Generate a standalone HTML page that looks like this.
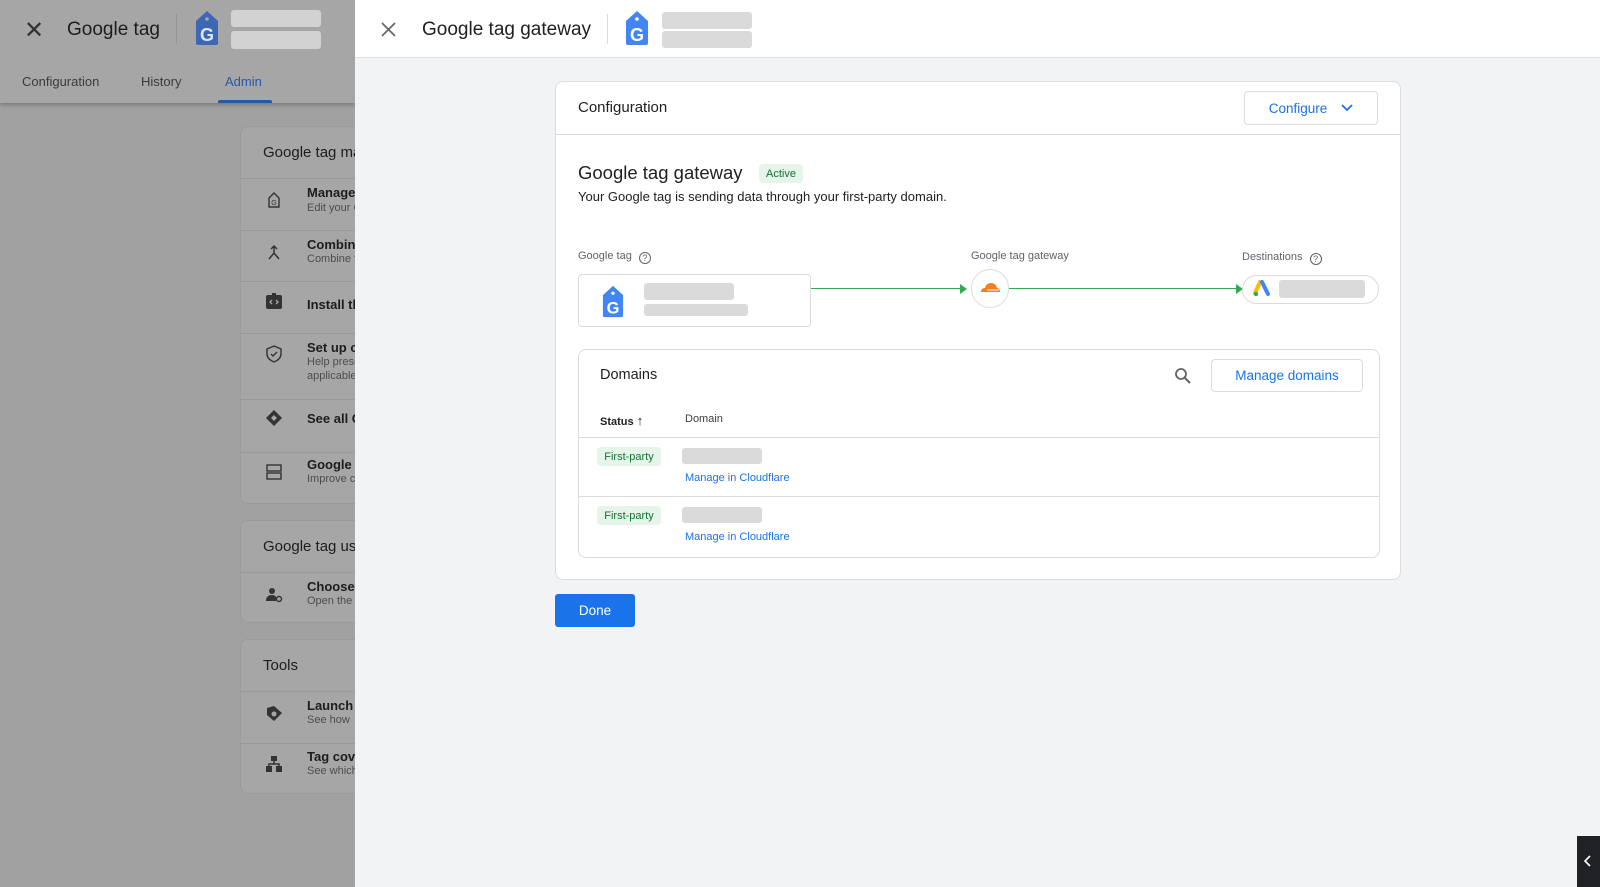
<!DOCTYPE html>
<html><head><meta charset="utf-8"><style>
*{box-sizing:border-box;margin:0;padding:0}
body{width:1600px;height:887px;overflow:hidden;font-family:"Liberation Sans",Arial,sans-serif;background:#f1f3f4;position:relative;color:#202124}
.a{position:absolute}
.ph{position:absolute;background:#dadada;border-radius:3px}
#left{left:0;top:0;width:355px;height:887px;background:#a1a1a2;overflow:hidden}
#left .hdr{left:0;top:0;width:355px;height:103px;background:#a6a6a7;box-shadow:0 2px 4px rgba(0,0,0,.25)}
.lc{position:absolute;left:240px;width:200px;background:#a6a6a7;border:1px solid #999a9b;border-radius:8px}
.lr{position:absolute;left:0;right:0;border-top:1px solid #999a9b}
.lt{position:absolute;left:66px;font-size:13px;font-weight:bold;color:#1d1d1d;white-space:nowrap}
.ls{position:absolute;left:66px;font-size:11px;color:#4d4d4d;white-space:nowrap}
.li{position:absolute;left:24px;width:18px;height:18px}
.card{position:absolute;background:#fff;border:1px solid #dadce0;border-radius:8px}
.lbl{font-size:11px;color:#5f6368}
.btn{position:absolute;border:1px solid #dadce0;border-radius:4px;background:#fff;color:#1a73e8;font-size:13.5px;display:flex;align-items:center;justify-content:center}
.chip{position:absolute;background:#e6f4ea;color:#137333;font-size:11px;border-radius:4px;display:flex;align-items:center;justify-content:center}
.link{position:absolute;color:#1a73e8;font-size:11px}
</style></head><body>

<div id="left" class="a">
  <div class="a hdr">
    <div class="a" style="left:24px;top:16px;font-size:24px;color:#333;font-weight:300">✕</div>
    <div class="a" style="left:67px;top:19px;font-size:19px;color:#1d1d1d">Google tag</div>
    <div class="a" style="left:176px;top:14px;width:1px;height:30px;background:#939393"></div>
    <svg class="a" style="left:194px;top:10px" width="26" height="36" viewBox="0 0 26 36"><path d="M13 1 L24 11 V33 Q24 35 22 35 H4 Q2 35 2 33 V11 Z" fill="#3d67b5"/><circle cx="13" cy="9" r="1.8" fill="#a6a6a7"/><text x="13" y="31" font-size="18" font-weight="bold" fill="#dfe6f2" text-anchor="middle" font-family="Liberation Sans">G</text></svg>
    <div class="a" style="left:231px;top:10px;width:90px;height:17px;background:#d2d2d2;border-radius:3px"></div>
    <div class="a" style="left:231px;top:31px;width:90px;height:18px;background:#d2d2d2;border-radius:3px"></div>
    <div class="a" style="left:22px;top:74px;font-size:13px;color:#3b3b3b">Configuration</div>
    <div class="a" style="left:141px;top:74px;font-size:13px;color:#3b3b3b">History</div>
    <div class="a" style="left:225px;top:74px;font-size:13px;color:#2a56a8">Admin</div>
    <div class="a" style="left:218px;top:100px;width:54px;height:3px;background:#2a56a8;border-radius:2px 2px 0 0"></div>
  </div>
  <div class="lc" style="top:126px;height:378px">
    <div class="a" style="left:22px;top:17px;font-size:15px;color:#1d1d1d;white-space:nowrap">Google tag management</div>
    <div class="lr" style="top:51px"></div>
    <svg class="li" style="top:64px" viewBox="0 0 18 18"><path d="M9 2 L14 7 V16 H4 V7 Z" fill="none" stroke="#333" stroke-width="1.4"/><text x="9" y="14" font-size="7" text-anchor="middle" fill="#333">G</text></svg>
    <div class="lt" style="top:58px">Manage Google tag</div><div class="ls" style="top:75px">Edit your Google tag</div>
    <div class="lr" style="top:103px"></div>
    <svg class="li" style="top:116px" viewBox="0 0 18 18"><path d="M9 3 V10 L4 16 M9 10 L14 16 M6 6 L9 3 L12 6" fill="none" stroke="#333" stroke-width="1.5"/></svg>
    <div class="lt" style="top:110px">Combine with another tag</div><div class="ls" style="top:126px">Combine tags</div>
    <div class="lr" style="top:154px"></div>
    <svg class="li" style="top:165px" viewBox="0 0 18 18"><rect x="1" y="3" width="16" height="14" rx="2" fill="#333"/><rect x="7" y="1" width="4" height="3" fill="#333"/><path d="M7 8 L5 10 L7 12 M11 8 L13 10 L11 12" stroke="#a6a6a7" stroke-width="1.3" fill="none"/></svg>
    <div class="lt" style="top:170px">Install this Google tag</div>
    <div class="lr" style="top:206px"></div>
    <svg class="li" style="top:218px" viewBox="0 0 18 18"><path d="M9 1 L16 4 V9 Q16 14 9 17 Q2 14 2 9 V4 Z M6 9 L8 11 L12 7" fill="none" stroke="#333" stroke-width="1.4"/></svg>
    <div class="lt" style="top:213px">Set up consent</div><div class="ls" style="top:229px">Help preserve</div><div class="ls" style="top:243px">applicable</div>
    <div class="lr" style="top:272px"></div>
    <svg class="li" style="top:282px" viewBox="0 0 18 18"><path d="M9 1 L17 9 L9 17 L1 9 Z" fill="#333"/><path d="M9 6 L12 9 L9 12 L6 9Z" fill="#a6a6a7"/></svg>
    <div class="lt" style="top:284px">See all Google tags</div>
    <div class="lr" style="top:325px"></div>
    <svg class="li" style="top:336px" viewBox="0 0 18 18"><rect x="2" y="2" width="14" height="6" fill="none" stroke="#333" stroke-width="1.4"/><rect x="2" y="10" width="14" height="6" fill="none" stroke="#333" stroke-width="1.4"/></svg>
    <div class="lt" style="top:330px">Google tag quality</div><div class="ls" style="top:346px">Improve coverage</div>
  </div>
  <div class="lc" style="top:520px;height:103px">
    <div class="a" style="left:22px;top:17px;font-size:15px;color:#1d1d1d;white-space:nowrap">Google tag usage</div>
    <div class="lr" style="top:51px"></div>
    <svg class="li" style="top:65px" viewBox="0 0 18 18"><circle cx="7" cy="5" r="3" fill="#333"/><path d="M1 15 Q1 9 7 9 Q10 9 11 11 V15Z" fill="#333"/><circle cx="14" cy="13" r="2.5" fill="none" stroke="#333" stroke-width="1.4"/></svg>
    <div class="lt" style="top:58px">Choose</div><div class="ls" style="top:74px">Open the</div>
  </div>
  <div class="lc" style="top:639px;height:155px">
    <div class="a" style="left:22px;top:17px;font-size:15px;color:#1d1d1d">Tools</div>
    <div class="lr" style="top:51px"></div>
    <svg class="li" style="top:64px" viewBox="0 0 18 18"><path d="M2 4 L9 2 L17 9 L9 17 L2 11 Z" fill="#333"/><circle cx="9" cy="10" r="2.5" fill="#a6a6a7"/></svg>
    <div class="lt" style="top:58px">Launch Tag Assistant</div><div class="ls" style="top:74px">See how</div>
    <div class="lr" style="top:103px"></div>
    <svg class="li" style="top:115px" viewBox="0 0 18 18"><rect x="6" y="1" width="6" height="5" fill="#333"/><rect x="1" y="11" width="6" height="6" fill="#333"/><rect x="11" y="11" width="6" height="6" fill="#333"/><path d="M9 6 V9 M4 11 V9 H14 V11" stroke="#333" stroke-width="1.5" fill="none"/></svg>
    <div class="lt" style="top:109px">Tag coverage</div><div class="ls" style="top:125px">See which</div>
  </div>
</div>

<!-- right panel -->
<div class="a" style="left:355px;top:0;width:1245px;height:58px;background:#fff;border-bottom:1px solid #e0e0e0"></div>
<svg class="a" style="left:381px;top:22px" width="15" height="15" viewBox="0 0 15 15"><path d="M1 1 L14 14 M14 1 L1 14" stroke="#5f6368" stroke-width="1.6"/></svg>
<div class="a" style="left:422px;top:19px;font-size:19px;color:#202124">Google tag gateway</div>
<div class="a" style="left:607px;top:14px;width:1px;height:30px;background:#dadce0"></div>
<svg class="a" style="left:624px;top:10px" width="26" height="36" viewBox="0 0 26 36"><path d="M13 1 L24 11 V33 Q24 35 22 35 H4 Q2 35 2 33 V11 Z" fill="#4285f4"/><circle cx="13" cy="9" r="1.8" fill="#fff"/><text x="13" y="31" font-size="18" font-weight="bold" fill="#fff" text-anchor="middle" font-family="Liberation Sans">G</text></svg>
<div class="ph" style="left:662px;top:12px;width:90px;height:17px"></div>
<div class="ph" style="left:662px;top:31px;width:90px;height:17px"></div>

<div class="card" style="left:555px;top:81px;width:846px;height:499px">
  <div class="a" style="left:22px;top:17px;font-size:15px">Configuration</div>
  <div class="btn" style="left:688px;top:9px;width:134px;height:34px">Configure<svg style="margin-left:14px" width="12" height="8" viewBox="0 0 12 8"><path d="M1 1 L6 6 L11 1" stroke="#1a73e8" stroke-width="1.8" fill="none"/></svg></div>
  <div class="a" style="left:0;top:52px;width:844px;height:1px;background:#dadce0"></div>
  <div class="a" style="left:22px;top:80px;font-size:18.5px">Google tag gateway</div>
  <div class="chip" style="left:203px;top:82px;width:44px;height:19px">Active</div>
  <div class="a" style="left:22px;top:107px;font-size:13px">Your Google tag is sending data through your first-party domain.</div>

  <div class="a lbl" style="left:22px;top:168px">Google tag <span style="display:inline-block;width:12px;height:12px;border:1.3px solid #5f6368;border-radius:50%;font-size:9px;text-align:center;line-height:10px;margin-left:4px;vertical-align:-2px">?</span></div>
  <div class="a" style="left:22px;top:192px;width:233px;height:53px;border:1px solid #dadce0;border-radius:4px;background:#fff"></div>
  <svg class="a" style="left:45px;top:203px" width="24" height="33" viewBox="0 0 26 36"><path d="M13 1 L24 11 V33 Q24 35 22 35 H4 Q2 35 2 33 V11 Z" fill="#4285f4"/><circle cx="13" cy="9" r="1.8" fill="#fff"/><text x="13" y="31" font-size="18" font-weight="bold" fill="#fff" text-anchor="middle" font-family="Liberation Sans">G</text></svg>
  <div class="ph" style="left:88px;top:201px;width:90px;height:17px"></div>
  <div class="ph" style="left:88px;top:222px;width:104px;height:12px"></div>
  <div class="a" style="left:255px;top:206px;width:150px;height:1px;background:#34a853"></div>
  <div class="a" style="left:404px;top:202px;width:0;height:0;border-left:7px solid #34a853;border-top:5px solid transparent;border-bottom:5px solid transparent"></div>
  <div class="a lbl" style="left:415px;top:168px">Google tag gateway</div>
  <div class="a" style="left:415px;top:187px;width:38px;height:39px;border:1px solid #dadce0;border-radius:19px;background:#fff"></div>
  <svg class="a" style="left:423px;top:198px" width="22" height="14" viewBox="0 0 22 14"><path d="M2 12 Q2 8 6 8 Q7 3 12 3 Q17 3 18 8 Q21 8 21 12 Z" fill="#f38020"/><path d="M8 10 H20" stroke="#fff" stroke-width="1"/></svg>
  <div class="a" style="left:453px;top:206px;width:230px;height:1px;background:#34a853"></div>
  <div class="a" style="left:680px;top:202px;width:0;height:0;border-left:7px solid #34a853;border-top:5px solid transparent;border-bottom:5px solid transparent"></div>
  <div class="a lbl" style="left:686px;top:169px">Destinations <span style="display:inline-block;width:12px;height:12px;border:1.3px solid #5f6368;border-radius:50%;font-size:9px;text-align:center;line-height:10px;margin-left:4px;vertical-align:-2px">?</span></div>
  <div class="a" style="left:686px;top:193px;width:137px;height:29px;border:1px solid #dadce0;border-radius:15px;background:#fff"></div>
  <svg class="a" style="left:697px;top:198px" width="18" height="17" viewBox="0 0 18 17"><path d="M7 2 L2 13" stroke="#fbbc04" stroke-width="4" stroke-linecap="round"/><path d="M9 2 L15 14" stroke="#4285f4" stroke-width="4" stroke-linecap="round"/><circle cx="3" cy="14" r="2.2" fill="#34a853"/></svg>
  <div class="ph" style="left:723px;top:198px;width:86px;height:18px"></div>

  <div class="card" style="left:22px;top:267px;width:802px;height:209px">
    <div class="a" style="left:21px;top:17px;font-size:14.5px">Domains</div>
    <svg class="a" style="left:595px;top:17px" width="18" height="18" viewBox="0 0 18 18"><circle cx="7" cy="7" r="5" stroke="#5f6368" stroke-width="1.8" fill="none"/><path d="M11 11 L16 16" stroke="#5f6368" stroke-width="2"/></svg>
    <div class="btn" style="left:632px;top:9px;width:152px;height:33px">Manage domains</div>
    <div class="a" style="left:21px;top:63px;font-size:11px;font-weight:bold">Status <span style="font-weight:normal;font-size:13px">↑</span></div>
    <div class="a" style="left:106px;top:63px;font-size:11px;color:#3c4043">Domain</div>
    <div class="a" style="left:0;top:87px;width:800px;height:1px;background:#dadce0"></div>
    <div class="chip" style="left:18px;top:97px;width:64px;height:19px">First-party</div>
    <div class="ph" style="left:103px;top:98px;width:80px;height:16px"></div>
    <div class="link" style="left:106px;top:122px">Manage in Cloudflare</div>
    <div class="a" style="left:0;top:146px;width:800px;height:1px;background:#dadce0"></div>
    <div class="chip" style="left:18px;top:156px;width:64px;height:19px">First-party</div>
    <div class="ph" style="left:103px;top:157px;width:80px;height:16px"></div>
    <div class="link" style="left:106px;top:181px">Manage in Cloudflare</div>
  </div>
</div>

<div class="a" style="left:555px;top:594px;width:80px;height:33px;background:#1a73e8;border-radius:3px;color:#fff;font-size:13.5px;display:flex;align-items:center;justify-content:center">Done</div>

<div class="a" style="left:1577px;top:836px;width:23px;height:51px;background:#202124"></div>
<svg class="a" style="left:1584px;top:855px" width="8" height="12" viewBox="0 0 8 12"><path d="M6 1 L1 6 L6 11" stroke="#fff" stroke-width="1.6" fill="none"/></svg>
</body></html>
